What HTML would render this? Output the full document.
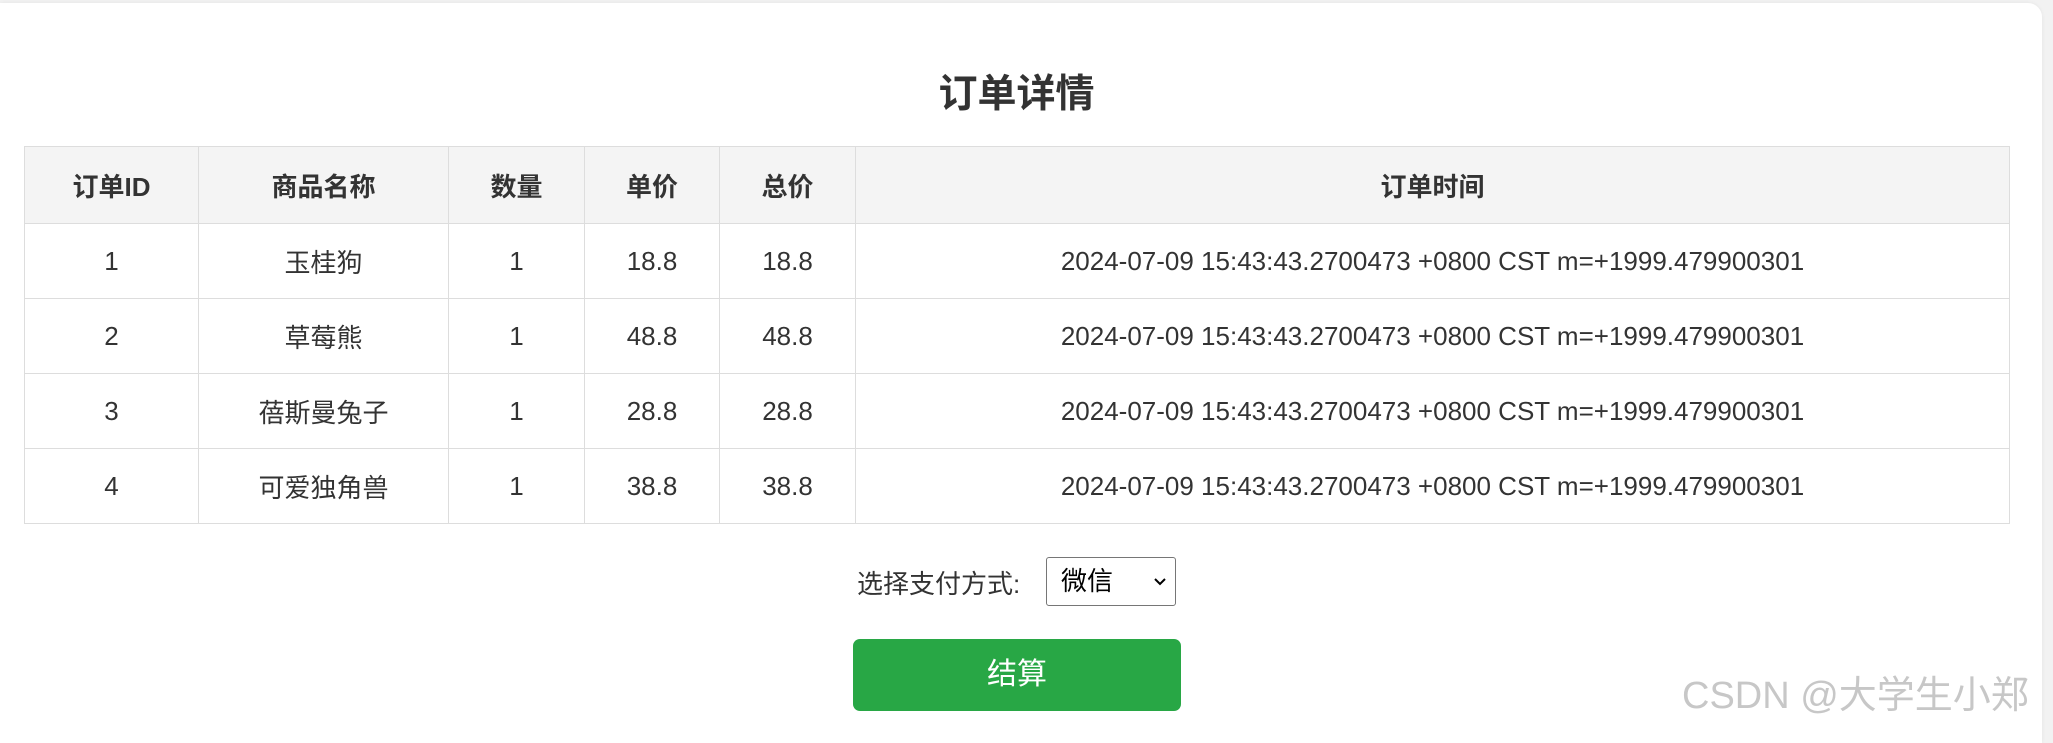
<!DOCTYPE html>
<html><head><meta charset="utf-8"><style>
html,body{margin:0;padding:0;}
body{width:2053px;height:733px;background:#f2f2f2;position:relative;overflow:hidden;font-family:"Liberation Sans","Noto Sans CJK SC",sans-serif;color:#333;}
.card{position:absolute;left:0;top:3px;width:2042px;height:740px;background:#fff;border-top-right-radius:14px;box-shadow:0 0 4px rgba(0,0,0,0.06);}
h2{position:absolute;left:0;width:2033px;top:70px;margin:0;text-align:center;font-size:39px;font-weight:bold;line-height:50px;color:#333;}
table{position:absolute;left:24px;top:146px;border-collapse:collapse;font-size:26px;}
td,th{border:1px solid #ddd;text-align:center;padding:0;}
th{background:#f4f4f4;height:76px;font-weight:bold;}
td{height:74px;}
.lbl{position:absolute;left:857px;top:566px;font-size:26px;line-height:36px;}
.sel{position:absolute;left:1046px;top:557px;width:130px;height:49px;border:1px solid #767676;border-radius:3px;box-sizing:border-box;font-size:26px;line-height:47px;padding-left:14px;color:#000;}
.sel svg{position:absolute;right:8px;top:19px;}
.btn{position:absolute;left:853px;top:639px;width:328px;height:72px;background:#28a745;border-radius:7px;color:#fff;font-size:30px;text-align:center;line-height:72px;}
.wm{position:absolute;left:1682px;top:672px;font-size:38px;color:rgba(180,180,180,0.75);white-space:nowrap;line-height:48px;}
</style></head><body>
<div class="card"></div>
<h2>订单详情</h2>
<table>
<tr><th style="width:173px">订单ID</th><th style="width:249px">商品名称</th><th style="width:135px">数量</th><th style="width:134px">单价</th><th style="width:135px">总价</th><th style="width:1153px">订单时间</th></tr>
<tr><td>1</td><td>玉桂狗</td><td>1</td><td>18.8</td><td>18.8</td><td>2024-07-09 15:43:43.2700473 +0800 CST m=+1999.479900301</td></tr>
<tr><td>2</td><td>草莓熊</td><td>1</td><td>48.8</td><td>48.8</td><td>2024-07-09 15:43:43.2700473 +0800 CST m=+1999.479900301</td></tr>
<tr><td>3</td><td>蓓斯曼兔子</td><td>1</td><td>28.8</td><td>28.8</td><td>2024-07-09 15:43:43.2700473 +0800 CST m=+1999.479900301</td></tr>
<tr><td>4</td><td>可爱独角兽</td><td>1</td><td>38.8</td><td>38.8</td><td>2024-07-09 15:43:43.2700473 +0800 CST m=+1999.479900301</td></tr>
</table>
<div class="lbl">选择支付方式:</div>
<div class="sel">微信<svg width="14" height="10" viewBox="0 0 14 10"><path d="M2 2 L7 7 L12 2" stroke="#000" stroke-width="2" fill="none"/></svg></div>
<div class="btn">结算</div>
<div class="wm">CSDN @大学生小郑</div>
</body></html>
